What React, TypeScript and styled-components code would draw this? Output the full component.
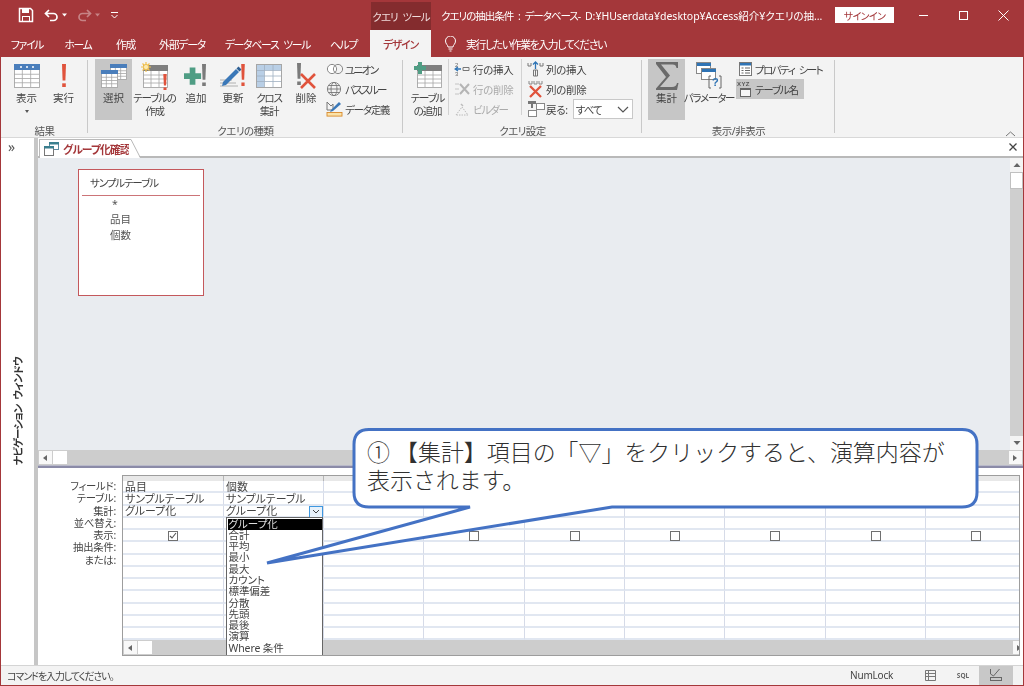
import React from "react";
import styled, { createGlobalStyle } from "styled-components";

const RED = "#a4373a";
const SANS = `"Noto Sans", "Noto Sans CJK JP", sans-serif`;
const JP = `"Noto Sans CJK JP", sans-serif`;

const Global = createGlobalStyle`
  html, body { margin: 0; padding: 0; background: #fff; }
  #root { width: 1024px; height: 686px; overflow: hidden; }
  * { box-sizing: border-box; }
`;

const Page = styled.div`
  position: relative;
  width: 1024px;
  height: 686px;
  overflow: hidden;
`;
const Frame = styled.div`
  width: 1024px;
  height: 686px;
  display: flex;
  flex-direction: column;
  border: 1px solid ${RED};
  border-top: 0;
  background: #f3f3f3;
  font-family: ${SANS};
  font-feature-settings: "palt";
  color: #444;
  filter: blur(0.3px);
`;

/* title bar */
const TitleBar = styled.div`
  height: 30px;
  flex: none;
  margin: 0 -1px;
  background: ${RED};
  display: flex;
  align-items: center;
  color: #fff;
`;
const Qat = styled.div`
  width: 371px;
  flex: none;
  display: flex;
  align-items: center;
  padding-left: 18px;
`;
const QatSlot = styled.span<{ $ml: number; $dim?: boolean }>`
  display: inline-flex;
  margin-left: ${(p) => p.$ml}px;
  opacity: ${(p) => (p.$dim ? 0.38 : 1)};
`;
const Context = styled.div`
  width: 60px;
  height: 28px;
  margin-top: 2px;
  flex: none;
  background: #842c2e;
  font-size: 10.5px;
  letter-spacing: -0.9px;
  word-spacing: 3px;
  display: flex;
  align-items: center;
  justify-content: center;
  white-space: nowrap;
  color: #f0dcdc;
`;
const DocTitle = styled.div`
  width: 378px;
  margin-left: 10px;
  margin-right: 16px;
  flex: none;
  font-size: 10.5px;
  white-space: nowrap;
`;
const TitleJp = styled.span`
  letter-spacing: -1px;
  word-spacing: 3px;
`;
const SignIn = styled.div`
  width: 59px;
  height: 16px;
  flex: none;
  background: #fff;
  color: ${RED};
  font-size: 10px;
  letter-spacing: -0.7px;
  display: flex;
  align-items: center;
  justify-content: center;
`;
const WinBtn = styled.div`
  width: 40px;
  flex: none;
  display: flex;
  justify-content: center;
`;
const WinGroup = styled.div`
  display: flex;
  margin-left: 9px;
`;

/* tabs */
const TabBar = styled.div`
  height: 27px;
  flex: none;
  margin: 0 -1px;
  background: ${RED};
  display: flex;
  color: #fff;
  padding-left: 1px;
`;
const MenuTab = styled.div<{ $w: number; $active?: boolean; $ml?: number }>`
  width: ${(p) => p.$w}px;
  margin-left: ${(p) => p.$ml ?? 0}px;
  flex: none;
  display: flex;
  align-items: center;
  justify-content: center;
  font-size: 10.8px;
  letter-spacing: -1.2px;
  word-spacing: 3px;
  white-space: nowrap;
  background: ${(p) => (p.$active ? "#f3f3f3" : "transparent")};
  color: ${(p) => (p.$active ? RED : "#fff")};
  font-weight: ${(p) => (p.$active ? 500 : 400)};
`;
const TellMe = styled.div`
  display: flex;
  align-items: center;
  gap: 9px;
  margin-left: 13px;
  font-size: 10.8px;
  letter-spacing: -1.3px;
  white-space: nowrap;
`;

/* ribbon */
const Ribbon = styled.div`
  height: 81px;
  flex: none;
  display: flex;
  background: #f3f3f3;
  border-bottom: 1px solid #d8d8d8;
`;
const Group = styled.div<{ $w: number; $pl: number }>`
  width: ${(p) => p.$w}px;
  flex: none;
  display: flex;
  flex-direction: column;
  padding: 2px 0 0 ${(p) => p.$pl}px;
  position: relative;
  &::after {
    content: "";
    position: absolute;
    right: 0;
    top: 3px;
    bottom: 4px;
    width: 1px;
    background: #c9c9c9;
  }
`;
const GroupBody = styled.div`
  height: 61px;
  display: flex;
  flex: none;
`;
const GroupLabel = styled.div<{ $pl: number }>`
  margin-left: -${(p) => p.$pl}px;
  text-align: center;
  font-size: 10.5px;
  letter-spacing: -0.5px;
  line-height: 14px;
  margin-top: 4px;
  color: #555;
`;
const BigButton = styled.div<{ $w: number; $on?: boolean }>`
  width: ${(p) => p.$w}px;
  flex: none;
  display: flex;
  flex-direction: column;
  align-items: center;
  padding-top: 4px;
  background: ${(p) => (p.$on ? "#c6c6c6" : "transparent")};
`;
const BigIcon = styled.div`
  height: 26px;
  flex: none;
  display: flex;
  align-items: center;
  justify-content: center;
`;
const BigLabel = styled.div<{ $tight?: boolean }>`
  margin-top: 3px;
  font-size: 10.5px;
  letter-spacing: ${(p) => (p.$tight ? "-1.2px" : "0")};
  line-height: 13px;
  text-align: center;
  white-space: pre;
  color: #444;
`;
const Caret = styled.div`
  width: 0;
  height: 0;
  margin-top: 5px;
  border-left: 2.5px solid transparent;
  border-right: 2.5px solid transparent;
  border-top: 3px solid #555;
`;
const SmallCol = styled.div<{ $ml: number; $w?: number; $sep?: boolean }>`
  margin-left: ${(p) => p.$ml}px;
  width: ${(p) => (p.$w ? `${p.$w}px` : "auto")};
  flex: none;
  display: flex;
  flex-direction: column;
  align-items: flex-start;
  border-left: ${(p) => (p.$sep ? "1px solid #d2d2d2" : "0")};
  padding-left: ${(p) => (p.$sep ? 5 : 0)}px;
  height: 56px;
`;
const SmallBtn = styled.div<{ $on?: boolean; $dim?: boolean; $ls?: number }>`
  height: 20px;
  flex: none;
  display: flex;
  align-items: center;
  gap: 1px;
  font-size: 10.5px;
  letter-spacing: ${(p) => p.$ls ?? -1.2}px;
  word-spacing: 3px;
  white-space: nowrap;
  padding-right: ${(p) => (p.$on ? 6 : 0)}px;
  background: ${(p) => (p.$on ? "#c6c6c6" : "transparent")};
  color: ${(p) => (p.$dim ? "#aaa" : "#444")};
`;
const Select = styled.div`
  width: 60px;
  height: 20px;
  margin-left: 4px;
  background: #fff;
  border: 1px solid #c8c8c8;
  letter-spacing: -1px;
  display: flex;
  align-items: center;
  justify-content: space-between;
  padding: 0 3px 0 2px;
`;
const Collapse = styled.div`
  margin-left: auto;
  align-self: flex-end;
  margin-right: 7px;
  display: flex;
`;

/* workspace */
const Work = styled.div`
  flex: 1;
  min-height: 0;
  display: flex;
  background: #fff;
`;
const Nav = styled.div`
  width: 33px;
  flex: none;
  display: flex;
  flex-direction: column;
  background: #fff;
`;
const NavHead = styled.div`
  height: 20px;
  flex: none;
  padding-left: 7px;
  font-size: 14px;
  line-height: 18px;
  color: #555;
`;
const NavTitle = styled.div`
  flex: 1;
  display: flex;
  align-items: center;
  justify-content: center;
`;
const NavText = styled.span`
  writing-mode: vertical-rl;
  text-orientation: sideways;
  transform: rotate(180deg);
  font-size: 10.5px;
  font-weight: 700;
  letter-spacing: -0.9px;
  word-spacing: 3px;
  white-space: nowrap;
  color: #333;
`;
const Splitter = styled.div`
  width: 4px;
  flex: none;
  background: #c6c6c6;
`;
const Doc = styled.div`
  flex: 1;
  min-width: 0;
  display: flex;
  flex-direction: column;
`;
const TabStrip = styled.div`
  height: 20px;
  flex: none;
  display: flex;
  align-items: flex-end;
  background: #fff;
  border-bottom: 2px solid #b9b9b9;
  padding-left: 1px;
`;
const DocTab = styled.div`
  height: 19px;
  margin-bottom: -2px;
  width: 90px;
  flex: none;
  display: flex;
  align-items: center;
  gap: 4px;
  padding-left: 4px;
  background: #fff;
  border-left: 1px solid #b9b9b9;
  border-top: 1px solid #b9b9b9;
  font-size: 10.8px;
  letter-spacing: -0.9px;
  font-weight: 700;
  color: ${RED};
  white-space: nowrap;
  svg { flex: none; }
`;
const TabEnd = styled.svg`
  flex: none;
  margin-bottom: -2px;
`;
const CloseDoc = styled.div`
  margin-left: auto;
  margin-right: 6px;
  align-self: center;
  display: flex;
`;
const Upper = styled.div`
  height: 307px;
  flex: none;
  display: flex;
  flex-direction: column;
  background: #e9ecf0;
`;
const UpperTop = styled.div`
  flex: 1;
  min-height: 0;
  display: flex;
`;
const Canvas = styled.div`
  flex: 1;
  padding: 11px 0 0 40px;
`;
const FieldBox = styled.div`
  width: 126px;
  height: 127px;
  background: #fff;
  border: 1.5px solid #c4585c;
  padding: 3px 3px;
`;
const BoxTitle = styled.div`
  height: 23px;
  padding-left: 8px;
  font-size: 10.5px;
  letter-spacing: -1.1px;
  line-height: 20px;
  border-bottom: 1.5px solid #cc7478;
  margin-bottom: 2px;
`;
const BoxField = styled.div<{ $star?: boolean }>`
  padding-left: ${(p) => (p.$star ? 30 : 28)}px;
  height: ${(p) => (p.$star ? 13 : 16)}px;
  line-height: ${(p) => (p.$star ? 12 : 16)}px;
  font-size: 10.5px;
  color: #555;
`;
const VScroll = styled.div`
  width: 13px;
  flex: none;
  display: flex;
  flex-direction: column;
  background: #cfcfcf;
`;
const VArrow = styled.div<{ $end?: boolean }>`
  height: 14px;
  flex: none;
  margin-top: ${(p) => (p.$end ? "auto" : 0)};
  background: #f4f4f4;
  display: flex;
  align-items: center;
  justify-content: center;
`;
const VThumb = styled.div`
  height: 17px;
  flex: none;
  background: #fff;
  border: 1px solid #c0c0c0;
`;
const HScroll = styled.div<{ $h: number }>`
  height: ${(p) => p.$h}px;
  flex: none;
  display: flex;
  align-items: stretch;
  background: #cdcdcd;
  gap: 1px;
  padding: 1px;
`;
const HArrow = styled.div<{ $end?: boolean }>`
  width: 13px;
  flex: none;
  margin-left: ${(p) => (p.$end ? "auto" : 0)};
  background: #f8f8f8;
  display: flex;
  align-items: center;
  justify-content: center;
`;
const HThumb = styled.div`
  width: 14px;
  flex: none;
  background: #fff;
`;
const Sash = styled.div`
  height: 3px;
  flex: none;
  background: #8b8ba8;
  border-top: 1px solid #b9b9c9;
`;
const Lower = styled.div`
  flex: 1;
  min-height: 0;
  background: #fff;
  display: flex;
  padding-top: 7px;
`;
const Labels = styled.div`
  width: 84px;
  flex: none;
  padding-top: 5px;
`;
const LabelRow = styled.div`
  height: 12.25px;
  line-height: 12.25px;
  text-align: right;
  padding-right: 6px;
  font-size: 10.3px;
  letter-spacing: -0.2px;
  color: #444;
  white-space: nowrap;
`;
const GridWrap = styled.div`
  position: relative;
  width: 898px;
  height: 181px;
  flex: none;
  border: 1px solid #9d9d9d;
  border-bottom-width: 1.5px;
  overflow: hidden;
  display: grid;
  grid-template-columns: 101px 100px 100px 101px 100px 100px 101px 100px 101px;
  grid-template-rows: 5px repeat(13, 12.25px) auto;
`;
const HeadCell = styled.div`
  background: #e8e8e8;
  border-right: 1px solid #b5b5b5;
`;
const Cell = styled.div<{ $check?: boolean }>`
  position: relative;
  border-right: 1px solid #d6dbe8;
  border-bottom: 2px solid #e1e7f1;
  font-size: 10.9px;
  line-height: 11px;
  padding-left: ${(p) => (p.$check ? 0 : 2)}px;
  white-space: nowrap;
  color: #444;
  display: flex;
  align-items: center;
`;
const Check = styled.span`
  width: 10px;
  height: 10px;
  margin: 1px auto 0;
  border: 1px solid #707070;
  display: flex;
  background: #fff;
`;
const GridScroll = styled(HScroll)`
  grid-column: 1 / -1;
`;
const DropBtn = styled.div`
  position: absolute;
  right: 0;
  top: 0;
  width: 14px;
  height: 12px;
  background: #e8f2fb;
  border: 1px solid #3f98e0;
  display: flex;
  align-items: center;
  justify-content: center;
`;
const DropList = styled.div`
  position: absolute;
  left: 103px;
  top: 41px;
  width: 97px;
  height: 138.5px;
  background: #fff;
  border: 1px solid #666;
  padding: 0.5px;
`;
const DropItem = styled.div<{ $on?: boolean }>`
  height: 11.3px;
  line-height: 11.3px;
  font-size: 10.5px;
  padding-left: 1px;
  white-space: nowrap;
  letter-spacing: ${(p) => (p.$on ? "0" : "-0.1px")};
  background: ${(p) => (p.$on ? "#000" : "transparent")};
  color: ${(p) => (p.$on ? "#ddd" : "#444")};
`;
const Status = styled.div`
  height: 20px;
  flex: none;
  display: flex;
  align-items: center;
  background: #f3f3f3;
  border-top: 1px solid #d4d4d4;
  font-size: 10px;
  padding: 0 0 1px 6px;
  color: #444;
`;
const StatusText = styled.span`
  letter-spacing: -1.1px;
`;
const NumLock = styled.div`
  margin-left: auto;
  width: 38px;
  font-size: 10px;
  letter-spacing: -0.2px;
  white-space: nowrap;
`;
const StatusIcon = styled.div<{ $ml: number; $w: number; $on?: boolean }>`
  margin-left: ${(p) => p.$ml}px;
  width: ${(p) => p.$w}px;
  height: 19px;
  flex: none;
  display: flex;
  align-items: center;
  justify-content: center;
  background: ${(p) => (p.$on ? "#c8c8c8" : "transparent")};
  font-size: 6.5px;
  font-weight: 700;
  color: #666;
`;
const StatusEnd = styled.div`
  width: 10px;
  flex: none;
`;

/* callout */
const CalloutShape = styled.svg`
  position: absolute;
  left: 0;
  top: 0;
  pointer-events: none;
`;
const CalloutText = styled.div`
  position: absolute;
  left: 367px;
  top: 437px;
  width: 600px;
  font-family: ${JP};
  font-size: 22.95px;
  font-weight: 300;
  line-height: 28px;
  color: #303030;
  white-space: pre-wrap;
`;

/* drawings */
type Tbl = { x: number; y: number; w: number; h: number; head?: string; cols?: number; rows?: number; line?: string };
function TableGlyph({ x, y, w, h, head = "#4a7ebb", cols = 3, rows = 4, line = "#a6a6a6" }: Tbl) {
  const hh = Math.round(h / 4);
  const items: React.ReactNode[] = [];
  for (let i = 1; i < cols; i++) {
    const px = x + (w * i) / cols;
    items.push(<line key={"c" + i} x1={px} y1={y + hh} x2={px} y2={y + h} stroke={line} strokeWidth="0.8" />);
  }
  for (let i = 1; i < rows; i++) {
    const py = y + hh + ((h - hh) * i) / rows;
    items.push(<line key={"r" + i} x1={x} y1={py} x2={x + w} y2={py} stroke={line} strokeWidth="0.8" />);
  }
  return (
    <g>
      <rect x={x + 0.5} y={y + 0.5} width={w} height={h} fill="#fff" stroke={line} strokeWidth="0.9" />
      {items}
      <rect x={x} y={y} width={w + 1} height={hh} fill={head} />
    </g>
  );
}
const Bang = ({ x, y, h, c = "#e0533c", w = 3 }: { x: number; y: number; h: number; c?: string; w?: number }) => (
  <g fill={c}>
    <path d={`M${x - w / 2} ${y}h${w}l-0.6 ${h * 0.72}h${-w + 1.2}z`} />
    <rect x={x - w / 2 + 0.2} y={y + h * 0.84} width={w - 0.4} height={h * 0.16} />
  </g>
);

const IconView = () => (
  <svg width="28" height="26" viewBox="0 0 28 26">
    <TableGlyph x={1} y={1} w={25} h={23} />
    <g fill="#fff">
      <circle cx="8" cy="4" r="1" />
      <circle cx="14" cy="4" r="1" />
      <circle cx="20" cy="4" r="1" />
    </g>
  </svg>
);
const IconRun = () => (
  <svg width="12" height="26" viewBox="0 0 12 26">
    <Bang x={6} y={1} h={23} w={4} />
  </svg>
);
const IconSelect = () => (
  <svg width="28" height="26" viewBox="0 0 28 26">
    <TableGlyph x={10} y={1} w={16} h={15} />
    <TableGlyph x={1} y={7} w={16} h={17} />
  </svg>
);
const IconMake = () => (
  <svg width="30" height="30" viewBox="0 0 30 30">
    <TableGlyph x={3} y={4} w={24} h={22} head="#7f7f7f" />
    <g stroke="#f2c14e" strokeWidth="1.2">
      <path d="M6 1v10M1 6h10M2.5 2.5l7 7M9.5 2.5l-7 7" />
    </g>
    <circle cx="6" cy="6" r="2.6" fill="#fbe9b0" stroke="#f2c14e" />
    <Bang x={25} y={13} h={16} w={3.4} />
  </svg>
);
const IconAppend = () => (
  <svg width="26" height="26" viewBox="0 0 26 26">
    <path d="M6 8h6v6h6v6h-6v6h-6v-6H0v-6h6z" transform="translate(1 -3) scale(.95)" fill="#4f9d84" />
    <Bang x={21} y={1} h={22} c="#7a7a7a" w={4} />
  </svg>
);
const IconUpdate = () => (
  <svg width="28" height="26" viewBox="0 0 28 26">
    <g stroke="#a9a9a9" strokeWidth="0.9">
      <path d="M1 17h12M1 20h16M1 23h18" />
    </g>
    <path d="M4 19L17 6l3 3L7 22l-4 1z" fill="#3b78b8" />
    <path d="M17.5 5.5l2-2 3 3-2 2z" fill="#2e5f93" />
    <Bang x={24} y={1} h={22} w={3.6} />
  </svg>
);
const IconCross = () => (
  <svg width="26" height="25" viewBox="0 0 26 25">
    <rect x="0.5" y="0.5" width="25" height="23" fill="#fff" stroke="#a6a6a6" />
    <rect x="1" y="1" width="24" height="5" fill="#b9cfe6" />
    <rect x="1" y="1" width="7" height="22" fill="#b9cfe6" />
    <path d="M8.5 1v22M17 1v22M1 6.5h24M1 12h24M1 17.500h24" stroke="#9fb0c2" strokeWidth="0.8" />
  </svg>
);
const IconDelete = () => (
  <svg width="24" height="28" viewBox="0 0 24 28">
    <Bang x={5} y={1} h={22} c="#7a7a7a" w={4} />
    <path d="M7 12l14 14M21 12L7 26" stroke="#e0533c" strokeWidth="2.6" />
  </svg>
);
const IconUnion = () => (
  <svg width="18" height="14" viewBox="0 0 18 14">
    <circle cx="6" cy="7" r="4.6" fill="#fff" stroke="#888" />
    <circle cx="12" cy="7" r="4.6" fill="none" stroke="#888" />
  </svg>
);
const IconGlobe = () => (
  <svg width="18" height="16" viewBox="0 0 18 16">
    <g fill="none" stroke="#777" strokeWidth="0.9">
      <circle cx="8" cy="8" r="6.6" />
      <ellipse cx="8" cy="8" rx="3" ry="6.6" />
      <path d="M1.4 8h13.2M2.500 4.500h11M2.500 11.500h11" />
    </g>
  </svg>
);
const IconDefine = () => (
  <svg width="18" height="18" viewBox="0 0 18 18">
    <path d="M1 2l4 4 2-2v6H1z" fill="none" stroke="#777" />
    <path d="M5 10l8-8 2 2-8 7-3 1z" fill="#3b78b8" />
    <rect x="1" y="12.500" width="15" height="3.600" fill="#fbe2a8" stroke="#d98a2b" strokeWidth="0.9" />
  </svg>
);
const IconAddTable = () => (
  <svg width="30" height="28" viewBox="0 0 30 28">
    <TableGlyph x={4} y={3} w={24} h={22} head="#7f7f7f" />
    <path d="M4 0h4v4h4v4H8v4H4V8H0V4h4z" transform="translate(1 0)" fill="#4f9d84" />
  </svg>
);
const IconRowIns = () => (
  <svg width="18" height="16" viewBox="0 0 18 16">
    <text x="1" y="6" fontSize="6" fill="#666" fontFamily="Liberation Sans">2</text>
    <text x="1" y="15" fontSize="6" fill="#666" fontFamily="Liberation Sans">3</text>
    <path d="M1 8h6M4 6l-3 2 3 2" stroke="#2f74b5" strokeWidth="1.3" fill="none" />
    <path d="M9 6.500h6v3H9z" fill="none" stroke="#777" />
  </svg>
);
const IconRowDel = () => (
  <svg width="18" height="16" viewBox="0 0 18 16">
    <path d="M1 3h4M1 8h4M1 13h4" stroke="#c4c4c4" />
    <path d="M6 3l9 10M15 3L6 13" stroke="#b5b5b5" strokeWidth="2" />
  </svg>
);
const IconBuilder = () => (
  <svg width="18" height="16" viewBox="0 0 18 16">
    <path d="M2 14l6-8 6 8z" fill="none" stroke="#bcbcbc" strokeDasharray="1.500 1" />
    <path d="M7 3l2 2" stroke="#bcbcbc" strokeWidth="1.500" />
  </svg>
);
const IconColIns = () => (
  <svg width="18" height="16" viewBox="0 0 18 16">
    <path d="M1 2v3h3V2M13 2v3h3V2" fill="none" stroke="#777" />
    <path d="M8.500 8V1M6 3.500l2.500-2.500 2.500 2.500" stroke="#2f74b5" strokeWidth="1.300" fill="none" />
    <path d="M6.500 9h4v6h-4zM8.500 9v6" fill="none" stroke="#777" />
  </svg>
);
const IconColDel = () => (
  <svg width="18" height="18" viewBox="0 0 18 18">
    <path d="M2 1v3h3V1M7 1v3h3V1M12 1v3h3V1" fill="none" stroke="#888" />
    <path d="M3 6l11 11M14 6L3 17" stroke="#e0533c" strokeWidth="2.300" />
  </svg>
);
const IconReturn = () => (
  <svg width="18" height="18" viewBox="0 0 18 18">
    <path d="M1 1h8v3H6v4H4V4H1z" fill="#777" />
    <rect x="9.500" y="3.500" width="8" height="6" fill="#fff" stroke="#888" />
    <rect x="1.500" y="10.500" width="8" height="6" fill="#fff" stroke="#888" />
  </svg>
);
const IconSigma = () => (
  <svg width="26" height="30" viewBox="0 0 26 30">
    <path d="M2 1h22v6h-1.500c-.5-2.500-1.500-3.500-4-3.500H7l9 11-10 11.500h12c3 0 4.500-1.200 5-4H24.500L23 29H2v-1.500L12 16 2 3z" fill="#6a6a6a" />
  </svg>
);
const IconParam = () => (
  <svg width="26" height="28" viewBox="0 0 26 28">
    <rect x="0.500" y="0.500" width="14" height="11" fill="#fff" stroke="#888" />
    <rect x="1" y="1" width="14" height="3" fill="#2f74b5" />
    <rect x="5.500" y="6.500" width="14" height="11" fill="#fff" stroke="#888" />
    <rect x="6" y="7" width="14" height="3" fill="#2f74b5" />
    <path d="M15 14h-2v12h2M23 14h2v12h-2" fill="none" stroke="#666" />
    <text x="16" y="24" fontSize="11" fontWeight="700" fill="#2f74b5" fontFamily="Liberation Sans">?</text>
  </svg>
);
const IconSheet = () => (
  <svg width="18" height="16" viewBox="0 0 18 16">
    <rect x="3.500" y="1.500" width="12" height="13" fill="#fff" stroke="#777" />
    <rect x="4" y="2" width="11" height="2.500" fill="#2f74b5" />
    <path d="M5.500 7h2M9 7h5M5.500 9.500h2M9 9.500h5M5.500 12h2M9 12h5" stroke="#666" />
  </svg>
);
const IconTableName = () => (
  <svg width="18" height="18" viewBox="0 0 18 18">
    <text x="1" y="6" fontSize="6" fontWeight="700" letterSpacing="0.400" fill="#555" fontFamily="Liberation Sans">XYZ</text>
    <rect x="4.500" y="9.500" width="10" height="7" fill="#f6f6f6" stroke="#666" />
    <rect x="4" y="8" width="11" height="2" fill="#666" />
  </svg>
);
const IconBulb = () => (
  <svg width="13" height="16" viewBox="0 0 13 16">
    <path d="M4 11c0-2-2.500-3-2.500-6a5 5 0 0 1 10 0c0 3-2.500 4-2.500 6zM4.500 13h4M5.500 15h2" fill="none" stroke="#fff" />
  </svg>
);
const IconDocTab = () => (
  <svg width="15" height="14" viewBox="0 0 15 14">
    <rect x="5.500" y="0.500" width="9" height="7" fill="#fff" stroke="#5b8aa0" />
    <rect x="5" y="0" width="10" height="2.500" fill="#3a7f8f" />
    <rect x="0.500" y="4.500" width="9" height="9" fill="#fff" stroke="#777" />
    <rect x="0" y="4" width="10" height="2.500" fill="#3a7f8f" />
  </svg>
);
const Tri = ({ dir }: { dir: "l" | "r" | "d" | "u" }) => {
  const d = { l: "M5 1v6L1 4z", r: "M1 1v6l4-3z", d: "M0.500 2h7L4 6z", u: "M0.500 6h7L4 2z" }[dir];
  return (
    <svg width="8" height="8" viewBox="0 0 8 8">
      <path d={d} fill="#666" />
    </svg>
  );
};
const Chev = ({ w = 12, h = 7, c = "#555", sw = 1.2 }: { w?: number; h?: number; c?: string; sw?: number }) => (
  <svg width={w} height={h} viewBox={`0 0 ${w} ${h}`}>
    <path d={`M1 1l${w / 2 - 1} ${h - 2}L${w - 1} 1`} fill="none" stroke={c} strokeWidth={sw} />
  </svg>
);
const CollapseChev = () => (
  <svg width="11" height="6" viewBox="0 0 11 6">
    <path d="M1 5l4.500-4L10 5" fill="none" stroke="#777" />
  </svg>
);
const GrayDrop = ({ c = "#fff" }: { c?: string }) => (
  <svg width="5" height="4" viewBox="0 0 5 4">
    <path d="M0 0.500h5L2.500 3.500z" fill={c} />
  </svg>
);
const Cross = ({ s = 11, c = "#fff", sw = 1 }: { s?: number; c?: string; sw?: number }) => (
  <svg width={s} height={s} viewBox={`0 0 ${s} ${s}`}>
    <path d={`M0.500 0.500L${s - 0.5} ${s - 0.5}M${s - 0.5} 0.500L0.500 ${s - 0.5}`} stroke={c} strokeWidth={sw} />
  </svg>
);

const LABELS = ["フィールド:", "テーブル:", "集計:", "並べ替え:", "表示:", "抽出条件:", "または:"];
const OPTIONS = ["グループ化", "合計", "平均", "最小", "最大", "カウント", "標準偏差", "分散", "先頭", "最後", "演算", "Where 条件"];
const COLS = 9;
const ROWS = 13;

const hasCheck = (r: number, c: number) => r === 4 && c !== 1 && c !== 2;

function cellContent(r: number, c: number): React.ReactNode {
  if (c < 2 && r === 0) return c === 0 ? "品目" : "個数";
  if (c < 2 && r === 1) return "サンプルテーブル";
  if (c < 2 && r === 2) return "グループ化";
  if (hasCheck(r, c))
    return (
      <Check>
        {c === 0 && (
          <svg width="8" height="8" viewBox="0 0 8 8">
            <path d="M1 4l2 2 4-5" fill="none" stroke="#555" strokeWidth="1.100" />
          </svg>
        )}
      </Check>
    );
  return null;
}

export default function App() {
  return (
    <Page>
      <Global />
      <Frame>
        <TitleBar>
          <Qat>
            <QatSlot $ml={0}>
              <svg width="16" height="16" viewBox="0 0 16 16">
                <path d="M1.500 1.500h11l2 2v11h-13z" fill="none" stroke="#fff" strokeWidth="1.500" />
                <rect x="4" y="2" width="7" height="4" fill="#fff" />
                <rect x="4.500" y="9.500" width="7" height="5" fill="none" stroke="#fff" />
              </svg>
            </QatSlot>
            <QatSlot $ml={10}>
              <svg width="15" height="13" viewBox="0 0 15 13">
                <path d="M5 1L1.500 4.500 5 8M2 4.500h7.500a3.500 3.500 0 0 1 0 7H6" fill="none" stroke="#fff" strokeWidth="1.700" />
              </svg>
            </QatSlot>
            <QatSlot $ml={3}><GrayDrop /></QatSlot>
            <QatSlot $ml={10} $dim>
              <svg width="15" height="13" viewBox="0 0 15 13">
                <path d="M10 1l3.500 3.500L10 8M13 4.500H5.500a3.500 3.500 0 0 0 0 7H9" fill="none" stroke="#fff" strokeWidth="1.700" />
              </svg>
            </QatSlot>
            <QatSlot $ml={3} $dim><GrayDrop /></QatSlot>
            <QatSlot $ml={11}>
              <svg width="7" height="7" viewBox="0 0 7 7">
                <path d="M0 0.500h7M0.500 3l3 3 3-3" fill="none" stroke="#fff" />
              </svg>
            </QatSlot>
          </Qat>
          <Context>クエリ ツール</Context>
          <DocTitle>
            <TitleJp>クエリの抽出条件 : データベース- </TitleJp>D:¥HUserdata¥desktop¥Access紹介¥クエリの抽…
          </DocTitle>
          <SignIn>サインイン</SignIn>
          <WinGroup>
            <WinBtn>
              <svg width="11" height="11" viewBox="0 0 11 11"><path d="M1 5.500h9" stroke="#fff" /></svg>
            </WinBtn>
            <WinBtn>
              <svg width="11" height="11" viewBox="0 0 11 11"><rect x="1.500" y="1.500" width="8" height="8" fill="none" stroke="#fff" /></svg>
            </WinBtn>
            <WinBtn><Cross /></WinBtn>
          </WinGroup>
        </TitleBar>

        <TabBar>
          <MenuTab $w={52}>ファイル</MenuTab>
          <MenuTab $w={50}>ホーム</MenuTab>
          <MenuTab $w={45}>作成</MenuTab>
          <MenuTab $w={68}>外部データ</MenuTab>
          <MenuTab $w={103}>データベース ツール</MenuTab>
          <MenuTab $w={49}>ヘルプ</MenuTab>
          <MenuTab $w={61} $ml={2} $active>デザイン</MenuTab>
          <TellMe><IconBulb />実行したい作業を入力してください</TellMe>
        </TabBar>

        <Ribbon>
          <Group $w={87} $pl={7}>
            <GroupBody>
              <BigButton $w={37}>
                <BigIcon><IconView /></BigIcon>
                <BigLabel>表示</BigLabel>
                <Caret />
              </BigButton>
              <BigButton $w={37}>
                <BigIcon><IconRun /></BigIcon>
                <BigLabel>実行</BigLabel>
              </BigButton>
            </GroupBody>
            <GroupLabel $pl={7}>結果</GroupLabel>
          </Group>

          <Group $w={315} $pl={7}>
            <GroupBody>
              <BigButton $w={37} $on>
                <BigIcon><IconSelect /></BigIcon>
                <BigLabel>選択</BigLabel>
              </BigButton>
              <BigButton $w={45}>
                <BigIcon><IconMake /></BigIcon>
                <BigLabel $tight>{"テーブルの\n作成"}</BigLabel>
              </BigButton>
              <BigButton $w={38}>
                <BigIcon><IconAppend /></BigIcon>
                <BigLabel>追加</BigLabel>
              </BigButton>
              <BigButton $w={36}>
                <BigIcon><IconUpdate /></BigIcon>
                <BigLabel>更新</BigLabel>
              </BigButton>
              <BigButton $w={36}>
                <BigIcon><IconCross /></BigIcon>
                <BigLabel $tight>{"クロス\n集計"}</BigLabel>
              </BigButton>
              <BigButton $w={38}>
                <BigIcon><IconDelete /></BigIcon>
                <BigLabel>削除</BigLabel>
              </BigButton>
              <SmallCol $ml={1}>
                <SmallBtn $ls={-1.6}><IconUnion />ユニオン</SmallBtn>
                <SmallBtn $ls={-1.6}><IconGlobe />パススルー</SmallBtn>
                <SmallBtn><IconDefine />データ定義</SmallBtn>
              </SmallCol>
            </GroupBody>
            <GroupLabel $pl={7}>クエリの種類</GroupLabel>
          </Group>

          <Group $w={239} $pl={6}>
            <GroupBody>
              <BigButton $w={37}>
                <BigIcon><IconAddTable /></BigIcon>
                <BigLabel $tight>{"テーブル\nの追加"}</BigLabel>
              </BigButton>
              <SmallCol $ml={2} $w={73} $sep>
                <SmallBtn $ls={-0.3}><IconRowIns />行の挿入</SmallBtn>
                <SmallBtn $ls={-0.3} $dim><IconRowDel />行の削除</SmallBtn>
                <SmallBtn $dim><IconBuilder />ビルダー</SmallBtn>
              </SmallCol>
              <SmallCol $ml={0} $sep>
                <SmallBtn $ls={-0.3}><IconColIns />列の挿入</SmallBtn>
                <SmallBtn $ls={-0.3}><IconColDel />列の削除</SmallBtn>
                <SmallBtn $ls={-0.3}>
                  <IconReturn />戻る:
                  <Select>
                    <span>すべて</span>
                    <Chev />
                  </Select>
                </SmallBtn>
              </SmallCol>
            </GroupBody>
            <GroupLabel $pl={6}>クエリ設定</GroupLabel>
          </Group>

          <Group $w={193} $pl={6}>
            <GroupBody>
              <BigButton $w={37} $on>
                <BigIcon><IconSigma /></BigIcon>
                <BigLabel>集計</BigLabel>
              </BigButton>
              <BigButton $w={48}>
                <BigIcon><IconParam /></BigIcon>
                <BigLabel $tight>パラメーター</BigLabel>
              </BigButton>
              <SmallCol $ml={3}>
                <SmallBtn $ls={-1.5}><IconSheet />プロパティ シート</SmallBtn>
                <SmallBtn $on><IconTableName />テーブル名</SmallBtn>
              </SmallCol>
            </GroupBody>
            <GroupLabel $pl={6}>表示/非表示</GroupLabel>
          </Group>

          <Collapse><CollapseChev /></Collapse>
        </Ribbon>

        <Work>
          <Nav>
            <NavHead>»</NavHead>
            <NavTitle><NavText>ナビゲーション ウィンドウ</NavText></NavTitle>
          </Nav>
          <Splitter />
          <Doc>
            <TabStrip>
              <DocTab><IconDocTab />グループ化確認</DocTab>
              <TabEnd width="12" height="19" viewBox="0 0 12 19">
                <path d="M0 0.500h2L11 19H0z" fill="#fff" />
                <path d="M0 0.500h2L11 18" fill="none" stroke="#b9b9b9" />
              </TabEnd>
              <CloseDoc><Cross s={8} c="#444" sw={1.300} /></CloseDoc>
            </TabStrip>
            <Upper>
              <UpperTop>
                <Canvas>
                  <FieldBox>
                    <BoxTitle>サンプルテーブル</BoxTitle>
                    <BoxField $star>*</BoxField>
                    <BoxField>品目</BoxField>
                    <BoxField>個数</BoxField>
                  </FieldBox>
                </Canvas>
                <VScroll>
                  <VArrow><Tri dir="u" /></VArrow>
                  <VThumb />
                  <VArrow $end><Tri dir="d" /></VArrow>
                </VScroll>
              </UpperTop>
              <HScroll $h={15}>
                <HArrow><Tri dir="l" /></HArrow>
                <HThumb />
                <HArrow $end><Tri dir="r" /></HArrow>
              </HScroll>
            </Upper>
            <Sash />
            <Lower>
              <Labels>
                {LABELS.map((l) => <LabelRow key={l}>{l}</LabelRow>)}
              </Labels>
              <GridWrap>
                {Array.from({ length: COLS }, (_, c) => <HeadCell key={c} />)}
                {Array.from({ length: ROWS }, (_, r) =>
                  Array.from({ length: COLS }, (_, c) => (
                    <Cell key={`${r}-${c}`} $check={hasCheck(r, c)}>
                      {cellContent(r, c)}
                      {r === 2 && c === 1 && (
                        <DropBtn><Chev w={8} h={5} c="#444" sw={1} /></DropBtn>
                      )}
                    </Cell>
                  ))
                )}
                <GridScroll $h={15}>
                  <HArrow><Tri dir="l" /></HArrow>
                  <HThumb />
                  <HArrow $end><Tri dir="r" /></HArrow>
                </GridScroll>
                <DropList>
                  {OPTIONS.map((o, i) => <DropItem key={o} $on={i === 0}>{o}</DropItem>)}
                </DropList>
              </GridWrap>
            </Lower>
          </Doc>
        </Work>

        <Status>
          <StatusText>コマンドを入力してください。</StatusText>
          <NumLock>NumLock</NumLock>
          <StatusIcon $ml={34} $w={16}>
            <svg width="13" height="13" viewBox="0 0 13 13">
              <path d="M1.500 1.500h10v10h-10zM1.500 4.500h10M1.500 7.500h10M4.500 1.500v10" fill="none" stroke="#777" />
            </svg>
          </StatusIcon>
          <StatusIcon $ml={15} $w={20}>SQL</StatusIcon>
          <StatusIcon $ml={6} $w={34} $on>
            <svg width="14" height="14" viewBox="0 0 14 14">
              <path d="M1.500 1v5l3 2 6-7" fill="none" stroke="#666" />
              <rect x="1.500" y="9.500" width="11" height="3" fill="none" stroke="#666" />
            </svg>
          </StatusIcon>
          <StatusEnd />
        </Status>
      </Frame>

      <CalloutShape width="1024" height="686" viewBox="0 0 1024 686">
        <path
          d="M369 429.500H962Q977 429.500 977 444.500V492.500Q977 507 962 507H612L267 563L470 507H369Q354 507 354 492.500V444.500Q354 429.500 369 429.500Z"
          fill="#fff"
          stroke="#4472c4"
          strokeWidth="3"
          strokeLinejoin="miter"
        />
      </CalloutShape>
      <CalloutText>{"① 【集計】項目の「▽」をクリックすると、演算内容が\n表示されます。"}</CalloutText>
    </Page>
  );
}
